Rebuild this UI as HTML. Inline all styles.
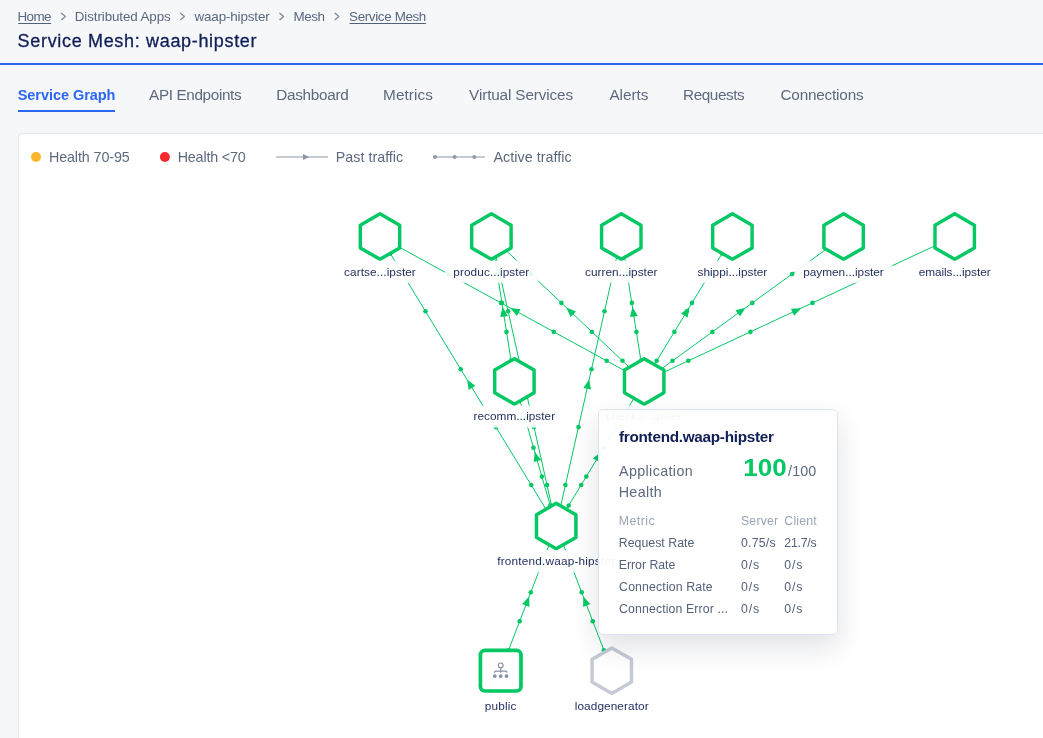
<!DOCTYPE html>
<html><head><meta charset="utf-8"><title>Service Mesh: waap-hipster</title>
<style>
html,body{margin:0;padding:0;}
body{width:1043px;height:738px;overflow:hidden;background:#f6f7f9;position:relative;font-family:"Liberation Sans", sans-serif;}
svg{position:absolute;left:0;top:0;font-family:"Liberation Sans", sans-serif;will-change:transform;}
svg text{white-space:pre;}
#panel{position:absolute;left:18px;top:133px;width:1100px;height:700px;background:#fff;border:1px solid #e1e5ee;border-radius:4px;box-sizing:border-box;}
#tip{position:absolute;left:598px;top:409px;width:240px;height:226px;box-sizing:border-box;background:rgba(255,255,255,0.95);border:1px solid #dde3f3;border-radius:5px;box-shadow:0 12px 28px rgba(15,25,45,0.13);}
</style></head>
<body>
<div id="panel"></div>
<svg width="1043" height="738" viewBox="0 0 1043 738">
<text x="17.5" y="21.4" font-size="13.4" fill="#596780" textLength="34.0" lengthAdjust="spacing">Home</text>
<rect x="18.2" y="23" width="32.9" height="1" fill="#51607a"/>
<text x="74.8" y="21.4" font-size="13.4" fill="#596780" textLength="95.9" lengthAdjust="spacing">Distributed Apps</text>
<text x="194.5" y="21.4" font-size="13.4" fill="#596780" textLength="75.2" lengthAdjust="spacing">waap-hipster</text>
<text x="293.5" y="21.4" font-size="13.4" fill="#596780" textLength="31.5" lengthAdjust="spacing">Mesh</text>
<text x="349.1" y="21.4" font-size="13.4" fill="#596780" textLength="77.2" lengthAdjust="spacing">Service Mesh</text>
<rect x="349.6" y="23" width="76.3" height="1" fill="#51607a"/>
<polyline points="61.6,13.2 65.4,16.45 61.6,19.7" fill="none" stroke="#7a879c" stroke-width="1.25" stroke-linecap="round" stroke-linejoin="round"/>
<polyline points="180.6,13.2 184.4,16.45 180.6,19.7" fill="none" stroke="#7a879c" stroke-width="1.25" stroke-linecap="round" stroke-linejoin="round"/>
<polyline points="279.8,13.2 283.6,16.45 279.8,19.7" fill="none" stroke="#7a879c" stroke-width="1.25" stroke-linecap="round" stroke-linejoin="round"/>
<polyline points="335.1,13.2 338.9,16.45 335.1,19.7" fill="none" stroke="#7a879c" stroke-width="1.25" stroke-linecap="round" stroke-linejoin="round"/>
<text x="17.6" y="46.9" font-size="18" fill="#0f1e57" textLength="238.9" lengthAdjust="spacing" stroke="#0f1e57" stroke-width="0.3">Service Mesh: waap-hipster</text>
<rect x="0" y="63" width="1043" height="2" fill="#2b67f0"/>
<text x="17.7" y="100.2" font-size="14.5" fill="#2b67f0" font-weight="bold" textLength="97.7" lengthAdjust="spacing">Service Graph</text>
<rect x="18" y="110" width="97" height="2" fill="#2b67f0"/>
<text x="149.1" y="100.2" font-size="15.3" fill="#5d697e" textLength="92.5" lengthAdjust="spacing">API Endpoints</text>
<text x="276.2" y="100.2" font-size="15.3" fill="#5d697e" textLength="72.6" lengthAdjust="spacing">Dashboard</text>
<text x="383.1" y="100.2" font-size="15.3" fill="#5d697e" textLength="49.8" lengthAdjust="spacing">Metrics</text>
<text x="469.1" y="100.2" font-size="15.3" fill="#5d697e" textLength="104.0" lengthAdjust="spacing">Virtual Services</text>
<text x="609.4" y="100.2" font-size="15.3" fill="#5d697e" textLength="39.1" lengthAdjust="spacing">Alerts</text>
<text x="683.1" y="100.2" font-size="15.3" fill="#5d697e" textLength="61.6" lengthAdjust="spacing">Requests</text>
<text x="780.5" y="100.2" font-size="15.3" fill="#5d697e" textLength="83.1" lengthAdjust="spacing">Connections</text>
<circle cx="36" cy="157" r="5" fill="#fdb52d"/>
<text x="48.9" y="162.3" font-size="14.3" fill="#5d697e" textLength="80.9" lengthAdjust="spacing">Health 70-95</text>
<circle cx="164.9" cy="157" r="5" fill="#f5282d"/>
<text x="177.7" y="162.3" font-size="14.3" fill="#5d697e" textLength="68.0" lengthAdjust="spacing">Health &lt;70</text>
<rect x="276" y="156" width="52" height="2" fill="#c6cbd2"/>
<polygon points="303,153.9 309.2,157 303,160.1" fill="#8d96a4"/>
<text x="335.8" y="162.3" font-size="14.3" fill="#5d697e" textLength="67.4" lengthAdjust="spacing">Past traffic</text>
<rect x="433" y="156" width="52" height="2" fill="#c6cbd2"/>
<circle cx="435.0" cy="157" r="2.05" fill="#929ba9"/>
<circle cx="454.6" cy="157" r="2.05" fill="#929ba9"/>
<circle cx="474.3" cy="157" r="2.05" fill="#929ba9"/>
<text x="493.5" y="162.3" font-size="14.3" fill="#5d697e" textLength="78.2" lengthAdjust="spacing">Active traffic</text>
</svg>
<svg width="1043" height="738" viewBox="0 0 1043 738">
<line x1="556.2" y1="526.1" x2="380.0" y2="236.6" stroke="#04c864" stroke-width="1.0"/>
<circle cx="531.2" cy="485.0" r="2.3" fill="#04c864"/>
<circle cx="495.9" cy="427.1" r="2.3" fill="#04c864"/>
<circle cx="460.7" cy="369.2" r="2.3" fill="#04c864"/>
<circle cx="425.5" cy="311.3" r="2.3" fill="#04c864"/>
<circle cx="390.2" cy="253.4" r="2.3" fill="#04c864"/>
<polygon points="467.1,379.6 475.4,385.8 468.7,389.9" fill="#04c864"/>
<line x1="556.2" y1="526.1" x2="491.4" y2="236.6" stroke="#04c864" stroke-width="1.0"/>
<circle cx="547.0" cy="485.0" r="2.3" fill="#04c864"/>
<circle cx="534.0" cy="427.1" r="2.3" fill="#04c864"/>
<circle cx="521.1" cy="369.2" r="2.3" fill="#04c864"/>
<circle cx="508.1" cy="311.3" r="2.3" fill="#04c864"/>
<circle cx="495.2" cy="253.4" r="2.3" fill="#04c864"/>
<polygon points="523.4,379.4 529.3,387.9 521.7,389.6" fill="#04c864"/>
<line x1="556.2" y1="526.1" x2="621.3" y2="236.6" stroke="#04c864" stroke-width="1.0"/>
<circle cx="565.4" cy="485.0" r="2.3" fill="#04c864"/>
<circle cx="578.5" cy="427.1" r="2.3" fill="#04c864"/>
<circle cx="591.5" cy="369.2" r="2.3" fill="#04c864"/>
<circle cx="604.5" cy="311.3" r="2.3" fill="#04c864"/>
<circle cx="617.5" cy="253.4" r="2.3" fill="#04c864"/>
<polygon points="589.2,379.4 590.9,389.6 583.3,387.9" fill="#04c864"/>
<circle cx="581.2" cy="485.0" r="2.3" fill="#04c864"/>
<circle cx="616.5" cy="427.1" r="2.3" fill="#04c864"/>
<circle cx="651.7" cy="369.2" r="2.3" fill="#04c864"/>
<circle cx="686.9" cy="311.3" r="2.3" fill="#04c864"/>
<circle cx="722.2" cy="253.4" r="2.3" fill="#04c864"/>
<polygon points="645.3,379.6 643.7,389.9 637.0,385.8" fill="#04c864"/>
<line x1="556.2" y1="526.1" x2="514.4" y2="381.4" stroke="#04c864" stroke-width="1.0"/>
<circle cx="550.3" cy="505.6" r="2.3" fill="#04c864"/>
<circle cx="541.9" cy="476.6" r="2.3" fill="#04c864"/>
<circle cx="533.5" cy="447.7" r="2.3" fill="#04c864"/>
<circle cx="525.2" cy="418.7" r="2.3" fill="#04c864"/>
<circle cx="516.8" cy="389.8" r="2.3" fill="#04c864"/>
<polygon points="534.7,451.8 541.2,460.0 533.7,462.1" fill="#04c864"/>
<line x1="556.2" y1="526.1" x2="644.2" y2="381.4" stroke="#04c864" stroke-width="1.0"/>
<circle cx="568.7" cy="505.6" r="2.3" fill="#04c864"/>
<circle cx="586.3" cy="476.6" r="2.3" fill="#04c864"/>
<circle cx="603.9" cy="447.7" r="2.3" fill="#04c864"/>
<circle cx="621.5" cy="418.7" r="2.3" fill="#04c864"/>
<circle cx="639.1" cy="389.8" r="2.3" fill="#04c864"/>
<polygon points="601.2,452.0 599.6,462.3 592.9,458.2" fill="#04c864"/>
<line x1="644.2" y1="381.4" x2="380.0" y2="236.6" stroke="#04c864" stroke-width="1.0"/>
<circle cx="606.7" cy="360.8" r="2.3" fill="#04c864"/>
<circle cx="553.8" cy="331.9" r="2.3" fill="#04c864"/>
<circle cx="501.0" cy="302.9" r="2.3" fill="#04c864"/>
<circle cx="448.2" cy="274.0" r="2.3" fill="#04c864"/>
<circle cx="395.3" cy="245.0" r="2.3" fill="#04c864"/>
<polygon points="510.3,308.0 520.6,309.2 516.9,316.1" fill="#04c864"/>
<line x1="644.2" y1="381.4" x2="491.4" y2="236.6" stroke="#04c864" stroke-width="1.0"/>
<circle cx="622.5" cy="360.8" r="2.3" fill="#04c864"/>
<circle cx="591.9" cy="331.9" r="2.3" fill="#04c864"/>
<circle cx="561.4" cy="302.9" r="2.3" fill="#04c864"/>
<circle cx="530.8" cy="274.0" r="2.3" fill="#04c864"/>
<circle cx="500.3" cy="245.0" r="2.3" fill="#04c864"/>
<polygon points="566.3,307.6 576.0,311.4 570.6,317.1" fill="#04c864"/>
<line x1="644.2" y1="381.4" x2="621.3" y2="236.6" stroke="#04c864" stroke-width="1.0"/>
<circle cx="640.9" cy="360.8" r="2.3" fill="#04c864"/>
<circle cx="636.4" cy="331.9" r="2.3" fill="#04c864"/>
<circle cx="631.8" cy="302.9" r="2.3" fill="#04c864"/>
<circle cx="627.2" cy="274.0" r="2.3" fill="#04c864"/>
<circle cx="622.6" cy="245.0" r="2.3" fill="#04c864"/>
<polygon points="632.4,307.0 637.8,315.9 630.1,317.1" fill="#04c864"/>
<line x1="644.2" y1="381.4" x2="732.4" y2="236.6" stroke="#04c864" stroke-width="1.0"/>
<circle cx="656.7" cy="360.8" r="2.3" fill="#04c864"/>
<circle cx="674.4" cy="331.9" r="2.3" fill="#04c864"/>
<circle cx="692.0" cy="302.9" r="2.3" fill="#04c864"/>
<circle cx="709.6" cy="274.0" r="2.3" fill="#04c864"/>
<circle cx="727.3" cy="245.0" r="2.3" fill="#04c864"/>
<polygon points="689.3,307.3 687.7,317.5 681.0,313.5" fill="#04c864"/>
<line x1="644.2" y1="381.4" x2="843.6" y2="236.6" stroke="#04c864" stroke-width="1.0"/>
<circle cx="672.5" cy="360.8" r="2.3" fill="#04c864"/>
<circle cx="712.4" cy="331.9" r="2.3" fill="#04c864"/>
<circle cx="752.3" cy="302.9" r="2.3" fill="#04c864"/>
<circle cx="792.2" cy="274.0" r="2.3" fill="#04c864"/>
<circle cx="832.0" cy="245.0" r="2.3" fill="#04c864"/>
<polygon points="745.5,307.8 740.0,316.6 735.5,310.3" fill="#04c864"/>
<line x1="644.2" y1="381.4" x2="954.7" y2="236.6" stroke="#04c864" stroke-width="1.0"/>
<circle cx="688.3" cy="360.8" r="2.3" fill="#04c864"/>
<circle cx="750.4" cy="331.9" r="2.3" fill="#04c864"/>
<circle cx="812.5" cy="302.9" r="2.3" fill="#04c864"/>
<circle cx="874.6" cy="274.0" r="2.3" fill="#04c864"/>
<circle cx="936.7" cy="245.0" r="2.3" fill="#04c864"/>
<polygon points="801.3,308.2 794.2,315.7 790.9,308.7" fill="#04c864"/>
<line x1="514.4" y1="381.4" x2="491.4" y2="236.6" stroke="#04c864" stroke-width="1.0"/>
<circle cx="511.1" cy="360.8" r="2.3" fill="#04c864"/>
<circle cx="506.5" cy="331.9" r="2.3" fill="#04c864"/>
<circle cx="501.9" cy="302.9" r="2.3" fill="#04c864"/>
<circle cx="497.3" cy="274.0" r="2.3" fill="#04c864"/>
<circle cx="492.7" cy="245.0" r="2.3" fill="#04c864"/>
<polygon points="502.6,307.0 507.9,315.9 500.2,317.1" fill="#04c864"/>
<line x1="500.7" y1="670.7" x2="556.2" y2="526.1" stroke="#04c864" stroke-width="1.0"/>
<circle cx="508.6" cy="650.2" r="2.3" fill="#04c864"/>
<circle cx="519.7" cy="621.2" r="2.3" fill="#04c864"/>
<circle cx="530.8" cy="592.3" r="2.3" fill="#04c864"/>
<circle cx="541.9" cy="563.4" r="2.3" fill="#04c864"/>
<circle cx="553.0" cy="534.5" r="2.3" fill="#04c864"/>
<polygon points="529.2,596.5 529.4,606.9 522.1,604.1" fill="#04c864"/>
<line x1="611.8" y1="670.7" x2="556.2" y2="526.1" stroke="#04c864" stroke-width="1.0"/>
<circle cx="603.9" cy="650.2" r="2.3" fill="#04c864"/>
<circle cx="592.8" cy="621.2" r="2.3" fill="#04c864"/>
<circle cx="581.7" cy="592.3" r="2.3" fill="#04c864"/>
<circle cx="570.5" cy="563.4" r="2.3" fill="#04c864"/>
<circle cx="559.4" cy="534.5" r="2.3" fill="#04c864"/>
<polygon points="583.3,596.5 590.4,604.1 583.1,606.9" fill="#04c864"/>
<polygon points="380.00,213.85 399.70,225.22 399.70,247.97 380.00,259.35 360.30,247.97 360.30,225.22" fill="#fff" stroke="#04c864" stroke-width="3.45" stroke-linejoin="round"/>
<polygon points="491.40,213.85 511.10,225.22 511.10,247.97 491.40,259.35 471.70,247.97 471.70,225.22" fill="#fff" stroke="#04c864" stroke-width="3.45" stroke-linejoin="round"/>
<polygon points="621.30,213.85 641.00,225.22 641.00,247.97 621.30,259.35 601.60,247.97 601.60,225.22" fill="#fff" stroke="#04c864" stroke-width="3.45" stroke-linejoin="round"/>
<polygon points="732.40,213.85 752.10,225.22 752.10,247.97 732.40,259.35 712.70,247.97 712.70,225.22" fill="#fff" stroke="#04c864" stroke-width="3.45" stroke-linejoin="round"/>
<polygon points="843.60,213.85 863.30,225.22 863.30,247.97 843.60,259.35 823.90,247.97 823.90,225.22" fill="#fff" stroke="#04c864" stroke-width="3.45" stroke-linejoin="round"/>
<polygon points="954.70,213.85 974.40,225.22 974.40,247.97 954.70,259.35 935.00,247.97 935.00,225.22" fill="#fff" stroke="#04c864" stroke-width="3.45" stroke-linejoin="round"/>
<polygon points="514.40,358.65 534.10,370.02 534.10,392.77 514.40,404.15 494.70,392.77 494.70,370.02" fill="#fff" stroke="#04c864" stroke-width="3.45" stroke-linejoin="round"/>
<polygon points="644.20,358.65 663.90,370.02 663.90,392.77 644.20,404.15 624.50,392.77 624.50,370.02" fill="#fff" stroke="#04c864" stroke-width="3.45" stroke-linejoin="round"/>
<polygon points="556.20,503.35 575.90,514.73 575.90,537.48 556.20,548.85 536.50,537.48 536.50,514.73" fill="#fff" stroke="#04c864" stroke-width="3.45" stroke-linejoin="round"/>
<rect x="480.40" y="650.40" width="40.60" height="40.60" rx="4.4" fill="#fff" stroke="#04c864" stroke-width="3.7"/>
<circle cx="500.70" cy="665.40" r="2.4" fill="none" stroke="#8691a7" stroke-width="1.2"/>
<path d="M500.70 668.20V672.80M494.60 672.80V672.10Q494.60 671.20 495.50 671.20H505.90Q506.80 671.20 506.80 672.10V672.80" stroke="#8691a7" stroke-width="1.25" fill="none"/>
<circle cx="494.85" cy="676.05" r="1.9" fill="#8691a7"/>
<circle cx="500.70" cy="676.05" r="1.9" fill="#8691a7"/>
<circle cx="506.55" cy="676.05" r="1.9" fill="#8691a7"/>
<polygon points="611.80,647.95 631.50,659.33 631.50,682.08 611.80,693.45 592.10,682.08 592.10,659.33" fill="#fff" stroke="#c5cad5" stroke-width="3.45" stroke-linejoin="round"/>
<rect x="335.6" y="260.8" width="88.9" height="22" fill="#fff" fill-opacity="0.9"/>
<rect x="444.9" y="260.8" width="93.0" height="22" fill="#fff" fill-opacity="0.9"/>
<rect x="576.5" y="260.8" width="89.5" height="22" fill="#fff" fill-opacity="0.9"/>
<rect x="688.9" y="260.8" width="86.9" height="22" fill="#fff" fill-opacity="0.9"/>
<rect x="794.8" y="260.8" width="97.6" height="22" fill="#fff" fill-opacity="0.9"/>
<rect x="910.2" y="260.8" width="89.1" height="22" fill="#fff" fill-opacity="0.9"/>
<rect x="465.1" y="405.6" width="98.6" height="22" fill="#fff" fill-opacity="0.9"/>
<rect x="597.6" y="405.6" width="93.3" height="22" fill="#fff" fill-opacity="0.9"/>
<rect x="488.7" y="550.3" width="135.1" height="22" fill="#fff" fill-opacity="0.9"/>
<rect x="476.3" y="694.9" width="48.8" height="22" fill="#fff" fill-opacity="0.9"/>
<rect x="566.3" y="694.9" width="91.0" height="22" fill="#fff" fill-opacity="0.9"/>
<text x="344.1" y="275.5" font-size="11.8" fill="#1f2b5c" textLength="71.7" lengthAdjust="spacing">cartse...ipster</text>
<text x="453.3" y="275.5" font-size="11.8" fill="#1f2b5c" textLength="76.0" lengthAdjust="spacing">produc...ipster</text>
<text x="585.1" y="275.5" font-size="11.8" fill="#1f2b5c" textLength="72.3" lengthAdjust="spacing">curren...ipster</text>
<text x="697.5" y="275.5" font-size="11.8" fill="#1f2b5c" textLength="69.7" lengthAdjust="spacing">shippi...ipster</text>
<text x="803.2" y="275.5" font-size="11.8" fill="#1f2b5c" textLength="80.6" lengthAdjust="spacing">paymen...ipster</text>
<text x="918.7" y="275.5" font-size="11.8" fill="#1f2b5c" textLength="71.9" lengthAdjust="spacing">emails...ipster</text>
<text x="473.5" y="420.3" font-size="11.8" fill="#1f2b5c" textLength="81.6" lengthAdjust="spacing">recomm...ipster</text>
<text x="606.1" y="420.3" font-size="11.8" fill="#1f2b5c" textLength="76.1" lengthAdjust="spacing">checko...ipster</text>
<text x="497.2" y="565.0" font-size="11.8" fill="#1f2b5c" textLength="117.9" lengthAdjust="spacing">frontend.waap-hipster</text>
<text x="484.7" y="709.6" font-size="11.8" fill="#1f2b5c" textLength="31.8" lengthAdjust="spacing">public</text>
<text x="574.7" y="709.6" font-size="11.8" fill="#1f2b5c" textLength="74.0" lengthAdjust="spacing">loadgenerator</text>
</svg>
<div id="tip"></div>
<svg width="1043" height="738" viewBox="0 0 1043 738">
<text x="619.0" y="442.2" font-size="15.3" fill="#0f1e57" font-weight="bold" textLength="155.0" lengthAdjust="spacing">frontend.waap-hipster</text>
<text x="619.0" y="475.9" font-size="14.3" fill="#5d697e" textLength="73.7" lengthAdjust="spacing">Application</text>
<text x="618.7" y="497.0" font-size="14.3" fill="#5d697e" textLength="43.0" lengthAdjust="spacing">Health</text>
<text x="743.3" y="475.9" font-size="23.4" fill="#04c864" font-weight="bold" textLength="43.4" lengthAdjust="spacingAndGlyphs">100</text>
<text x="788.1" y="475.9" font-size="14.3" fill="#5d697e" textLength="28.0" lengthAdjust="spacing">/100</text>
<text x="618.8" y="525.0" font-size="12.3" fill="#9aa3b4" textLength="35.8" lengthAdjust="spacing">Metric</text>
<text x="741.0" y="525.0" font-size="12.3" fill="#9aa3b4" textLength="37.1" lengthAdjust="spacing">Server</text>
<text x="784.3" y="525.0" font-size="12.3" fill="#9aa3b4" textLength="32.4" lengthAdjust="spacing">Client</text>
<text x="618.8" y="547.2" font-size="12.3" fill="#55617a" textLength="75.5" lengthAdjust="spacing">Request Rate</text>
<text x="741.0" y="547.2" font-size="12.3" fill="#55617a" textLength="34.6" lengthAdjust="spacing">0.75/s</text>
<text x="784.3" y="547.2" font-size="12.3" fill="#55617a" textLength="32.4" lengthAdjust="spacing">21.7/s</text>
<text x="618.8" y="568.9" font-size="12.3" fill="#55617a" textLength="56.5" lengthAdjust="spacing">Error Rate</text>
<text x="741.0" y="568.9" font-size="12.3" fill="#55617a" textLength="18.1" lengthAdjust="spacing">0/s</text>
<text x="784.3" y="568.9" font-size="12.3" fill="#55617a" textLength="18.1" lengthAdjust="spacing">0/s</text>
<text x="619.1" y="590.9" font-size="12.3" fill="#55617a" textLength="93.6" lengthAdjust="spacing">Connection Rate</text>
<text x="741.0" y="590.9" font-size="12.3" fill="#55617a" textLength="18.1" lengthAdjust="spacing">0/s</text>
<text x="784.3" y="590.9" font-size="12.3" fill="#55617a" textLength="18.1" lengthAdjust="spacing">0/s</text>
<text x="619.1" y="613.0" font-size="12.3" fill="#55617a" textLength="108.8" lengthAdjust="spacing">Connection Error ...</text>
<text x="741.0" y="613.0" font-size="12.3" fill="#55617a" textLength="18.1" lengthAdjust="spacing">0/s</text>
<text x="784.3" y="613.0" font-size="12.3" fill="#55617a" textLength="18.1" lengthAdjust="spacing">0/s</text>
</svg>
</body></html>
